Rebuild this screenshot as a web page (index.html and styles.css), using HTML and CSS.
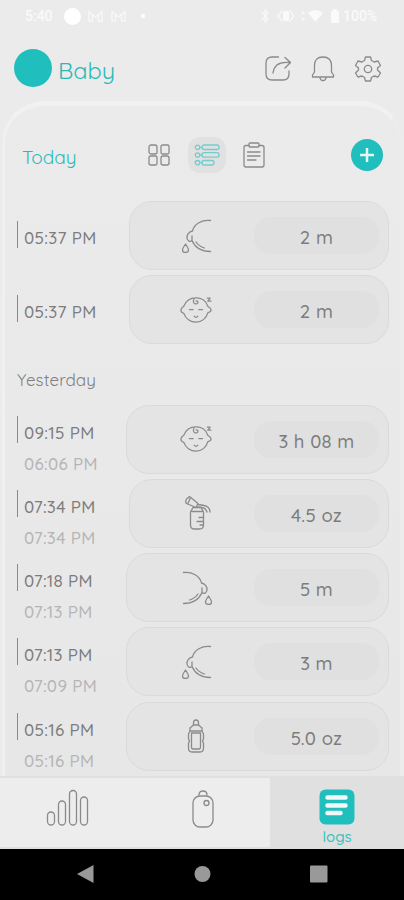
FILE: index.html
```html
<!DOCTYPE html>
<html lang="en">
<head>
    <meta charset="UTF-8">
    <meta name="viewport" content="width=device-width, initial-scale=1.0">
    <title>Baby logs</title>
    <link rel="stylesheet" href="styles.css">
</head>
<body>
    <!-- Shared icons -->
    <svg class="sprite" aria-hidden="true">
        <symbol id="breast" viewBox="0 0 30 34">
            <path d="M28.500 1.500C20 0.500 12 5 10.500 12C7 12.500 4.500 16 5 19C5.500 22 8 23.500 10 21.500V17M10 21.500C13 28.500 19 32.500 28.500 32.500M14 23C16 26 19 28 22.500 29"/>
            <path d="M3.500 25C1.500 28 0.500 29.500 0.500 31A3 2.500 0 0 0 6.500 31C6.500 29.500 5.500 28 3.500 25Z"/>
        </symbol>
        <symbol id="baby" viewBox="0 0 34 28">
            <path d="M4 10C6 4.500 11 1 17 1S28 4.500 29.500 10C32 11.500 33 13 33 14S31.500 16.500 29.500 17C28 23 23 27 17 27S6 23 4 17.500C2 17 1 15.500 1 14S2.500 11 4 10Z"/>
            <path d="M15 2C13 5.500 15 8 17.500 7.500C20 7 19.500 3.500 17 4.500M10 13.500H14M20 13.500H24M15 20.500Q17 23 19 20.500M29 1.500H32L29.500 4.500H33"/>
        </symbol>
        <symbol id="pump" viewBox="0 0 28 36">
            <path d="M5.500 1.500L14 8.500L12 12.500L2.500 8.500Q1 7 2.500 4ZM6.500 2.500L4 8.500M14 9.500C20 10 26 11 26 17M14 12C19 12 22 13 23 17M9 12.500H17L19.500 17V30Q19.500 34 15.500 34H10.500Q6.500 34 6.500 30V17L9 12.500M8 16.500H18M15 22.500H19M13 26.500H19M16 30H19"/>
        </symbol>
        <symbol id="bottle" viewBox="0 0 18 34">
            <path d="M6.500 6V4Q6.500 1 9 1T11.500 4V6L15 9V12H3V9L6.500 6H11.500M3 12L1.500 15V20L2.500 22L1.500 24V29Q1.500 33 5 33H13Q16.500 33 16.500 29V24L15.500 22L16.500 20V15L15 12M4.500 14H13.500V28Q13.500 30 12 30H6Q4.500 30 4.500 28Z"/>
        </symbol>
    </svg>

    <div class="phone">
        <!-- Status bar -->
        <div class="status-bar">
            <span class="clock">5:40</span>
            <span class="status-dot"></span>
            <svg class="mail" width="42" height="14" viewBox="0 0 42 14"><path class="line" d="M2 12V2.500L8.500 8L15 2.500V12H11.500V6M2 12H5.500V6M25 12V2.500L31.500 8L38 2.500V12H34.500V6M25 12H28.500V6"/></svg>
            <span class="status-more"></span>
            <svg class="status-icons" width="82" height="18" viewBox="0 0 82 18">
                <path class="line" d="M2 5L8 12L5 15V3L8 6L2 13M22 4L18 9L22 14M30 4L34 9L30 14"/>
                <rect x="23" y="4" width="6" height="10" rx="1"/>
                <path d="M43 4L45 7H41ZM43 14L45 11H41ZM48 6Q55 0 63 6L55.500 15ZM71 4H73V2H77V4H79V16H71Z"/>
            </svg>
            <span class="battery">100%</span>
        </div>

        <!-- Header -->
        <header class="header">
            <span class="avatar"></span>
            <h1>Baby</h1>
            <div class="header-actions">
                <svg width="28" height="28" viewBox="0 0 28 28"><path d="M14.500 2H8Q2 2 2 8V19Q2 25 8 25H19Q25 25 25 19V16M9 18C10 10 15 6.500 25 7.500M21 2.500L26.500 7.500L21 13"/></svg>
                <svg width="24" height="28" viewBox="0 0 24 28"><path d="M3.500 17V10.500Q3.500 2 12 2T20.500 10.500V17L22.500 20V22H1.500V20L3.500 17M9 22Q9 25.500 12 25.500T15 22"/></svg>
                <svg width="28" height="28" viewBox="0 0 28 28"><path d="M11.500 2H16.500L17.500 5.500L20 7L24 6L26.500 10.500L23.500 13V15L26.500 18L24 22L20 21L17.500 22.500L16.500 26H11.500L10.500 22.500L8 21L4 22L1.500 18L4.500 15V13L1.500 10.500L4 6L8 7L10.500 5.500Z"/><circle cx="14" cy="14" r="3.700"/></svg>
            </div>
        </header>

        <!-- Logs panel -->
        <main class="panel">
            <div class="toolbar">
                <h2>Today</h2>
                <div class="views">
                    <svg width="22" height="22" viewBox="0 0 22 22"><rect x="1" y="1" width="8" height="9" rx="2"/><rect x="13" y="1" width="8" height="9" rx="1.500"/><rect x="1" y="12" width="8" height="9" rx="1.500"/><rect x="13" y="12" width="8" height="9" rx="2"/></svg>
                    <span class="view-active">
                        <svg width="26" height="22" viewBox="0 0 26 22"><rect x="8" y="1" width="17" height="4.500" rx="2"/><rect x="8" y="8.700" width="17" height="4.500" rx="2"/><rect x="8" y="16.500" width="12" height="4.500" rx="2"/><circle cx="3.500" cy="3.300" r="2.200"/><circle cx="3.500" cy="11" r="2.200"/><circle cx="3.500" cy="18.700" r="2.200"/><path d="M5.700 3.300H8M5.700 11H8M5.700 18.700H8"/></svg>
                    </span>
                    <svg width="22" height="26" viewBox="0 0 22 26"><path d="M6 3.500H3Q1 3.500 1 5.500V23Q1 25 3 25H19Q21 25 21 23V5.500Q21 3.500 19 3.500H16M4.500 10H17M4.500 14H17M4.500 18H13"/><rect x="6" y="1" width="10" height="4" rx="1"/></svg>
                </div>
                <button class="add"><svg width="16" height="16" viewBox="0 0 16 16"><path d="M8 1V15M1 8H15"/></svg></button>
            </div>

            <section class="logs">
                <div class="row single">
                    <div class="times"><p>05:37 PM</p></div>
                    <div class="card narrow"><svg class="breast"><use href="#breast"/></svg><span class="value">2 m</span></div>
                </div>
                <div class="row single">
                    <div class="times"><p>05:37 PM</p></div>
                    <div class="card narrow"><svg class="baby"><use href="#baby"/></svg><span class="value">2 m</span></div>
                </div>
            </section>

            <h3>Yesterday</h3>

            <section class="logs">
                <div class="row">
                    <div class="times"><p>09:15 PM</p><p class="start">06:06 PM</p></div>
                    <div class="card"><svg class="baby"><use href="#baby"/></svg><span class="value">3 h 08 m</span></div>
                </div>
                <div class="row">
                    <div class="times"><p>07:34 PM</p><p class="start">07:34 PM</p></div>
                    <div class="card narrow"><svg class="pump"><use href="#pump"/></svg><span class="value">4.5 oz</span></div>
                </div>
                <div class="row">
                    <div class="times"><p>07:18 PM</p><p class="start">07:13 PM</p></div>
                    <div class="card"><svg class="breast right"><use href="#breast"/></svg><span class="value">5 m</span></div>
                </div>
                <div class="row">
                    <div class="times"><p>07:13 PM</p><p class="start">07:09 PM</p></div>
                    <div class="card"><svg class="breast"><use href="#breast"/></svg><span class="value">3 m</span></div>
                </div>
                <div class="row">
                    <div class="times"><p>05:16 PM</p><p class="start">05:16 PM</p></div>
                    <div class="card"><svg class="bottle"><use href="#bottle"/></svg><span class="value">5.0 oz</span></div>
                </div>
            </section>
        </main>

        <!-- Tabs -->
        <nav class="tabs">
            <a class="tab"><svg width="44" height="38" viewBox="0 0 44 38"><rect x="1.500" y="23" width="7" height="13" rx="3.500"/><rect x="12.500" y="12" width="7" height="24" rx="3.500"/><rect x="23.500" y="1.500" width="7" height="34.500" rx="3.500"/><rect x="34.500" y="8" width="7" height="28" rx="3.500"/></svg></a>
            <a class="tab"><svg width="24" height="40" viewBox="0 0 24 40"><rect x="2" y="7" width="20" height="31" rx="7"/><path d="M8 6Q8 2 12 2T16 6"/><circle cx="15.500" cy="14" r="2.500"/></svg></a>
            <a class="tab active">
                <svg width="36" height="36" viewBox="0 0 36 36"><rect class="fill" x="0.500" y="0.500" width="35" height="35" rx="6"/><path d="M8.500 8.500H26.500M8.500 16.500H26.500M8.500 24H21.500"/></svg>
                <span>logs</span>
            </a>
        </nav>

        <!-- System buttons -->
        <div class="system-nav">
            <svg width="404" height="51" viewBox="0 0 404 51"><path d="M77 25L93.500 16V34Z"/><circle cx="202.500" cy="25" r="8"/><rect x="310" y="16.500" width="17.500" height="17" rx="1"/></svg>
        </div>
    </div>
</body>
</html>
```

FILE: styles.css
```css
* {
    margin: 0;
    padding: 0;
    box-sizing: border-box;
}

body {
    background: #ebebeb;
    color: #7c7c7c;
    font-family: 'Quicksand', 'Lato', sans-serif;
    font-weight: 500;
}

svg {
    display: block;
    flex: none;
    fill: none;
    stroke: #8a8a8a;
    stroke-width: 1.3;
    stroke-linecap: round;
    stroke-linejoin: round;
}

h1, h2, h3 {
    font-weight: 450;
}

.sprite {
    position: absolute;
    width: 0;
    height: 0;
}

.phone {
    width: 404px;
    height: 900px;
    display: flex;
    flex-direction: column;
    overflow: hidden;
}

/* Status bar */
.status-bar {
    height: 32px;
    flex: none;
    display: flex;
    align-items: center;
    padding: 0 25px;
    color: #fafafa;
    font-family: Roboto, sans-serif;
    font-size: 14px;
}

.status-bar svg {
    fill: #fafafa;
    stroke: none;
}

.status-bar .line {
    fill: none;
    stroke: #f8f8f8;
}

.clock {
    width: 39px;
}

.status-dot {
    width: 17px;
    height: 17px;
    border-radius: 50%;
    background: #fff;
}

.mail {
    margin-left: 6px;
}

.status-more {
    width: 4px;
    height: 4px;
    margin-left: 12px;
    border-radius: 50%;
    background: #fff;
}

.status-icons {
    margin-left: auto;
    margin-right: 1px;
}

.battery {
    width: 36px;
}

/* Header */
.header {
    height: 69px;
    flex: none;
    display: flex;
    align-items: center;
    padding: 4px 22px 0 14px;
}

.avatar {
    width: 38px;
    height: 38px;
    margin-top: -1px;
    border-radius: 50%;
    background: #20bfbe;
}

.header h1 {
    margin-left: 6px;
    padding-top: 2px;
    color: #2bb9b8;
    font-size: 23.500px;
}

.header-actions {
    display: flex;
    gap: 19px;
    margin-left: auto;
}

/* Panel */
.panel {
    flex: 1;
    min-height: 0;
    margin: 0 1px 0 2px;
    padding: 0 13px 0 12px;
    border: 3px solid #f0f0f0;
    border-top: 5px solid #f1f1f1;
    border-right-color: #ececec;
    border-bottom: none;
    border-radius: 42px 42px 0 0;
    background: linear-gradient(#ebebeb, #e7e7e7);
    overflow: hidden;
}

.toolbar {
    height: 95px;
    display: flex;
    align-items: center;
    padding: 3px 4px 0 5px;
}

.toolbar h2 {
    width: 126px;
    padding-top: 3px;
    color: #2bb9b8;
    font-size: 19px;
}

.views {
    display: flex;
    align-items: center;
    gap: 17.500px;
}

.view-active {
    width: 38px;
    height: 36px;
    display: flex;
    align-items: center;
    justify-content: center;
    border-radius: 12px;
    background: #e1e1e1;
}

.view-active svg {
    stroke: #75cccb;
}

.add {
    width: 32px;
    height: 32px;
    display: flex;
    align-items: center;
    justify-content: center;
    margin-left: auto;
    border: none;
    border-radius: 50%;
    background: #20bfbe;
}

.add svg {
    stroke: #e6f5f5;
    stroke-width: 2.5;
    stroke-linecap: butt;
}

/* Log rows */
.row {
    height: 68px;
    display: flex;
    justify-content: space-between;
    margin-bottom: 6.300px;
}

.times {
    padding-top: 11px;
    font-size: 17px;
}

.times p {
    height: 27px;
    padding-left: 6px;
    border-left: 1.500px solid #8a8a8a;
    line-height: 33px;
    letter-spacing: 0.300px;
    white-space: nowrap;
}

.times .start {
    margin-top: 4px;
    border-color: transparent;
    color: #b5b5b5;
}

.single .times {
    padding-top: 20px;
}

.card {
    width: 263px;
    height: 69px;
    flex: none;
    display: flex;
    align-items: center;
    justify-content: space-between;
    padding-right: 9px;
    border: 1px solid #dadada;
    border-radius: 23px;
    background: #e4e4e4;
    margin-right: -2px;
}

.card.narrow {
    width: 260px;
}

.card svg {
    width: 32px;
    height: 34px;
    margin-left: auto;
    margin-right: 42px;
}

.card svg.baby {
    height: 28px;
}

.card svg.breast {
    width: 30px;
}

.card svg.pump {
    width: 28px;
    height: 36px;
}

.card svg.bottle {
    width: 18px;
    margin-right: 49px;
}

.card svg.right {
    transform: scaleX(-1);
}

.value {
    width: 125px;
    height: 37px;
    border-radius: 17px;
    background: #e0e0e0;
    font-size: 18.500px;
    line-height: 40px;
    letter-spacing: 0.300px;
    text-align: center;
}

.panel h3 {
    height: 55px;
    color: #808080;
    font-size: 17px;
    line-height: 59px;
    letter-spacing: 0.100px;
}

/* Tabs */
.tabs {
    height: 73px;
    flex: none;
    display: flex;
    border-top: 2px solid #e0e0e0;
    border-bottom: 2px solid #dedede;
    background: #ededed;
}

.tab {
    width: 135px;
    display: flex;
    flex-direction: column;
    align-items: center;
    padding-top: 11px;
}

.tab.active {
    flex: 1;
    background: #e0e0e0;
    color: #3ac0bf;
    font-size: 15px;
    line-height: 24px;
}

.tab.active svg {
    stroke: #f0f8f8;
    stroke-width: 4.500;
}

.tab.active .fill {
    fill: #20bfbe;
    stroke: none;
}

/* System buttons */
.system-nav {
    height: 51px;
    flex: none;
    background: #000;
}

.system-nav svg {
    fill: #999;
    stroke: none;
}
```
